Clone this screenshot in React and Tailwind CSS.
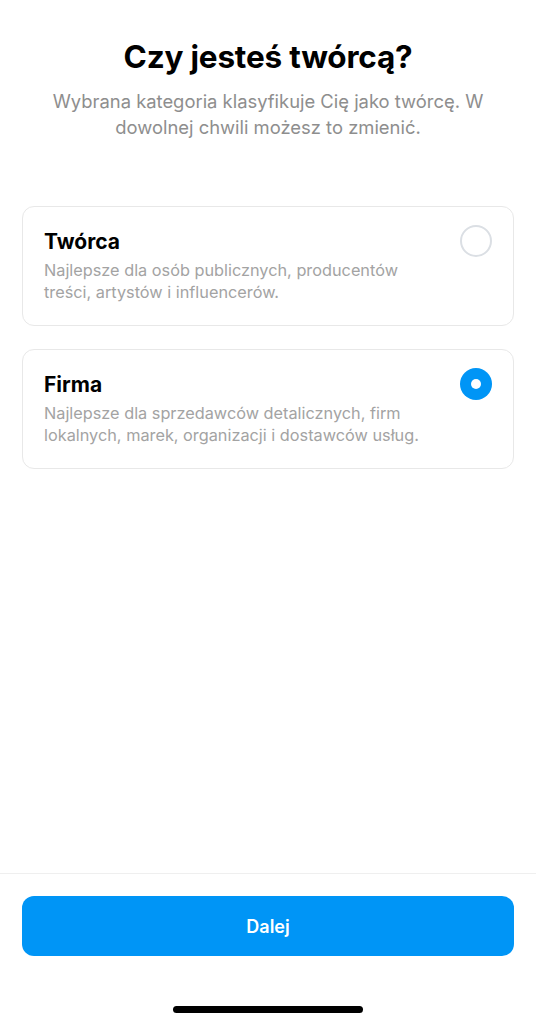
import { useState } from 'react'

const options = [
  {
    id: 'creator',
    title: 'Twórca',
    desc: 'Najlepsze dla osób publicznych, producentów treści, artystów i influencerów.',
  },
  {
    id: 'business',
    title: 'Firma',
    desc: 'Najlepsze dla sprzedawców detalicznych, firm lokalnych, marek, organizacji i dostawców usług.',
  },
]

function Radio({ checked }) {
  if (checked) {
    return (
      <div className="-mt-[2px] flex h-8 w-8 shrink-0 items-center justify-center rounded-full bg-[#0095f6]">
        <div className="h-[10px] w-[10px] rounded-full bg-white" />
      </div>
    )
  }
  return <div className="-mt-[2px] h-8 w-8 shrink-0 rounded-full border-2 border-[#dbdfe4]" />
}

export default function App() {
  const [selected, setSelected] = useState('business')

  return (
    <div className="flex h-[1024px] w-full flex-col bg-white font-['Inter','Liberation_Sans',sans-serif]">
      <div className="px-[22px] pt-[37px]">
        <h1 className="text-center text-[31.5px] font-bold leading-[40px] tracking-[-0.2px] text-black">
          Czy jesteś twórcą?
        </h1>
        <p className="mx-auto mt-[11px] max-w-[450px] text-center text-[18.4px] leading-[26px] text-[#8e8e8e]">
          Wybrana kategoria klasyfikuje Cię jako twórcę. W dowolnej chwili możesz to zmienić.
        </p>
      </div>

      <div className="mt-[66px] flex flex-col gap-[23px] px-[22px]">
        {options.map((o) => (
          <button
            key={o.id}
            onClick={() => setSelected(o.id)}
            className="flex h-[120px] items-start rounded-[12px] border border-[#e8e8e8] pl-[21px] pr-[21px] pt-[20px] text-left"
          >
            <div className="flex-1 pr-6">
              <div className="text-[21px] font-bold leading-[30px] text-black">{o.title}</div>
              <div className="mt-[2px] max-w-[385px] text-[16.3px] leading-[22px] text-[#a3a3a3]">{o.desc}</div>
            </div>
            <Radio checked={selected === o.id} />
          </button>
        ))}
      </div>

      <div className="flex-1" />

      <div className="border-t border-[#efefef] px-[22px] pt-[22px]">
        <button className="flex h-[60px] w-full items-center justify-center rounded-[12px] bg-[#0095f6] text-[18px] font-semibold text-white">
          Dalej
        </button>
        <div className="flex justify-center pb-[11px] pt-[50px]">
          <div className="h-[7px] w-[190px] rounded-full bg-black" />
        </div>
      </div>
    </div>
  )
}
